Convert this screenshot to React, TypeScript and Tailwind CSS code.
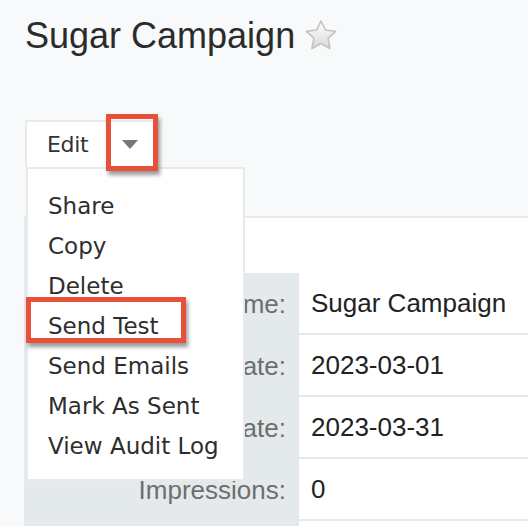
import React from "react";

const sans = { fontFamily: '"Liberation Sans", Arial, sans-serif' };
const menuFont = { fontFamily: '"DejaVu Sans", Verdana, sans-serif' };

function Star() {
  return (
    <svg width="36" height="32" viewBox="0 0 36 32" className="blur-[0.4px]">
      <defs>
        <linearGradient id="sg" x1="0" y1="0" x2="0" y2="1">
          <stop offset="0" stopColor="#ffffff" />
          <stop offset="1" stopColor="#d9d9d9" />
        </linearGradient>
      </defs>
      <path
        d="M18 2 L22.4 11 L32.5 12.4 L25.1 19.4 L27 29.5 L18 24.6 L9 29.5 L10.9 19.4 L3.5 12.4 L13.6 11 Z"
        fill="url(#sg)"
        stroke="#c4c4c4"
        strokeWidth="1.7"
        strokeLinejoin="round"
      />
    </svg>
  );
}

const rows = [
  { label: "Name:", value: "Sugar Campaign" },
  { label: "Start Date:", value: "2023-03-01" },
  { label: "End Date:", value: "2023-03-31" },
  { label: "Impressions:", value: "0" },
];

const items = ["Share", "Copy", "Delete", "Send Test", "Send Emails", "Mark As Sent", "View Audit Log"];

export default function App() {
  return (
    <div className="relative w-[528px] h-[526px] overflow-hidden bg-[#f8f9fa]">
      {/* Title */}
      <div className="flex items-center pl-[25px] pt-[18px] gap-[8px]">
        <h1 className="text-[36px] leading-[36px] text-[#2b2b2b]" style={sans}>
          Sugar Campaign
        </h1>
        <div className="-mt-[2px]">
          <Star />
        </div>
      </div>

      {/* Button group */}
      <div className="mt-[66px] ml-[25px] flex h-[47px] w-[131px] bg-white border-t-2 border-l-2 border-[#e6eaed]">
        <div className="flex items-center pl-[20px] text-[22px] text-[#333] tracking-[-0.3px]" style={menuFont}>
          Edit
        </div>
        <div className="relative flex-1 flex items-center justify-center pl-[16px]">
          <svg width="16" height="9" viewBox="0 0 16 9">
            <path d="M0 0 L16 0 L8 9 Z" fill="#777" />
          </svg>
        </div>
      </div>

      {/* Panel */}
      <div className="mt-[49px] ml-[24px] bg-white border-t-2 border-l-[3px] border-[#e4e9ec]">
        <div className="h-[55px]" />
        <div className="grid grid-cols-[272px_1fr]">
          {rows.map((r) => (
            <React.Fragment key={r.label}>
              <div
                className="bg-[#e4e9ec] h-[62px] flex items-center justify-end pr-[13px] text-[26px] text-[#6e6e6e]"
                style={sans}
              >
                {r.label}
              </div>
              <div
                className="h-[62px] flex items-center pl-[12px] text-[26px] text-[#222] border-b-2 border-[#e4e9ec]"
                style={sans}
              >
                {r.value}
              </div>
            </React.Fragment>
          ))}
          <div className="bg-[#e4e9ec] h-[40px]" />
          <div />
        </div>
      </div>

      {/* Dropdown menu */}
      <div
        className="absolute left-[26px] top-[167px] w-[219px] h-[314px] bg-white border-2 border-[#e6eaed] pt-[17px]"
        style={menuFont}
      >
        {items.map((it) => (
          <div key={it} className="h-[40px] leading-[40px] pl-[20px] text-[23px] text-[#2e2e2e]">
            {it}
          </div>
        ))}
      </div>

      {/* Highlight boxes */}
      <div className="absolute left-[106px] top-[114px] w-[52px] h-[57px] border-[5px] border-[#e8503a] shadow-[2px_4px_4px_rgba(0,0,0,0.4)]" />
      <div className="absolute left-[26px] top-[297px] w-[160px] h-[46px] border-[5px] border-[#e8503a] shadow-[2px_4px_4px_rgba(0,0,0,0.4)]" />
    </div>
  );
}
